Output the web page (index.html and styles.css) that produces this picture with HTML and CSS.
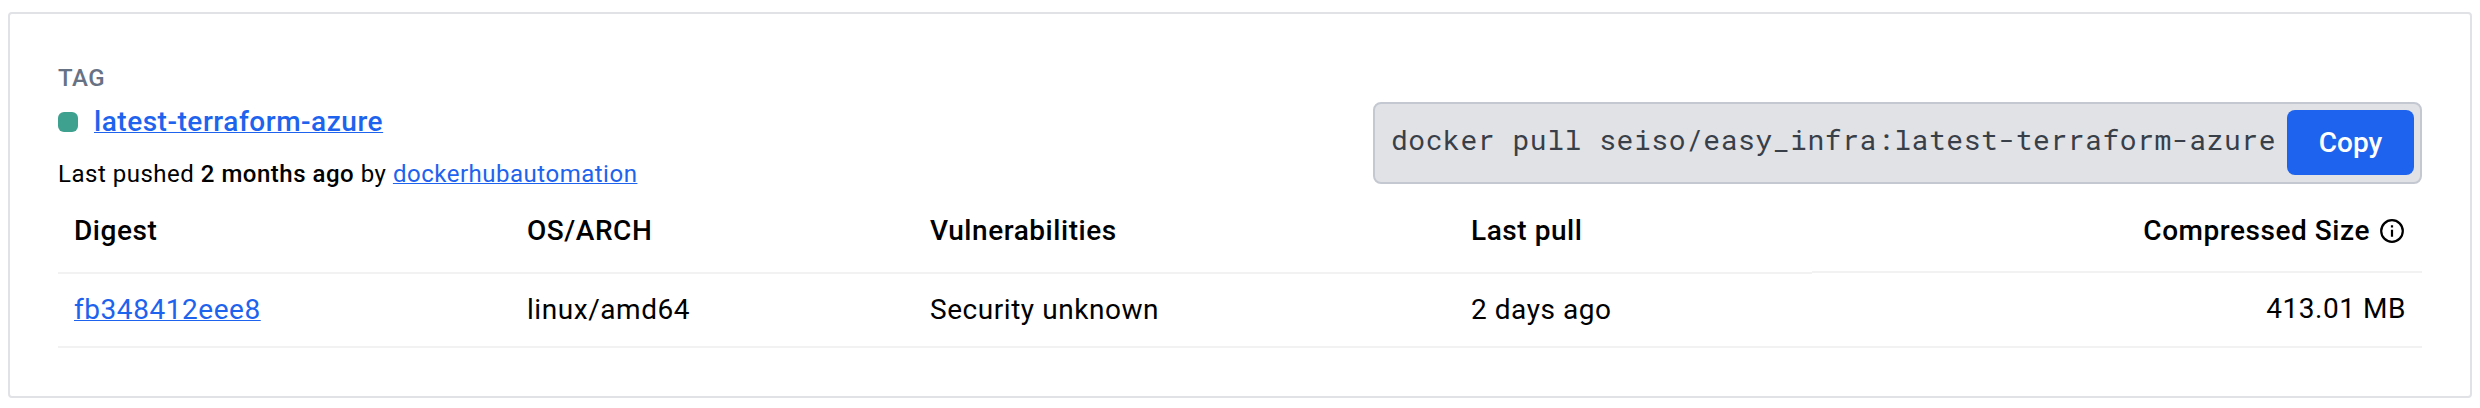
FILE: index.html
```html
<!DOCTYPE html>
<html lang="en">
<head>
<meta charset="utf-8">
<title>latest-terraform-azure</title>
<link rel="stylesheet" href="styles.css">
</head>
<body>
<section class="card">
  <header class="card-head">
    <div class="tag">
      <div class="tag-label">TAG</div>
      <div class="tag-name"><span class="status"></span><a class="tag-link" href="#">latest-terraform-azure</a></div>
      <div class="pushed">Last pushed <strong>2 months ago</strong> by <a href="#">dockerhubautomation</a></div>
    </div>
    <div class="command">
      <code class="command-text">docker pull seiso/easy_infra:latest-terraform-azure</code>
      <button class="copy" type="button">Copy</button>
    </div>
  </header>
  <div class="table">
    <div class="th">Digest</div>
    <div class="th">OS/ARCH</div>
    <div class="th">Vulnerabilities</div>
    <div class="th">Last pull</div>
    <div class="th th-size">
      <span>Compressed Size</span>
      <svg class="info" viewBox="0 0 24 24" aria-hidden="true">
        <circle cx="12" cy="12" r="10.8" fill="none" stroke="currentColor" stroke-width="2.2"/>
        <path d="M10.9 6.2h2.2v2.2h-2.2zM10.9 10.8h2.2v7h-2.2z" fill="currentColor"/>
      </svg>
    </div>
    <div class="td"><a href="#">fb348412eee8</a></div>
    <div class="td">linux/amd64</div>
    <div class="td">Security unknown</div>
    <div class="td">2 days ago</div>
    <div class="td td-size">413.01 MB</div>
  </div>
</section>
</body>
</html>
```
FILE: styles.css
```css
* { box-sizing: border-box; }
body {
  margin: 0;
  padding: 12px 8px 10px;
  background: #fff;
  color: #000;
  font: 400 28px/36px Roboto, sans-serif;
  letter-spacing: 0.55px;
}
a {
  color: #1d63ed;
  text-decoration: underline;
  text-decoration-thickness: 1px;
  text-underline-offset: 1px;
  text-decoration-skip-ink: none;
}
.card {
  height: 386px;
  padding: 50px 48px 48px;
  border: 2px solid #e1e2e6;
  border-radius: 4px;
}
.card-head {
  display: flex;
  justify-content: space-between;
  align-items: flex-start;
  height: 125px;
}
.tag { display: flex; flex-direction: column; }
.tag-label {
  color: #677285;
  font-size: 24px;
  font-weight: 500;
  line-height: 28px;
  letter-spacing: 0.5px;
}
.tag-name {
  display: flex;
  align-items: center;
  gap: 16px;
  height: 36px;
  margin: 12px 0 20px;
}
.status {
  width: 20px;
  height: 20px;
  border-radius: 6px;
  background: #3ea08e;
}
.tag-link { font-weight: 500; letter-spacing: 0.53px; }
.pushed { font-size: 24px; line-height: 28px; letter-spacing: 0.51px; }
.pushed strong { font-weight: 500; }
.command {
  display: flex;
  align-items: flex-start;
  justify-content: space-between;
  width: 1049px;
  height: 82px;
  margin-top: 38px;
  padding: 6px 6px 0 16px;
  border: 2px solid #c4c8d1;
  border-radius: 8px;
  background: #e1e2e6;
}
.command-text {
  margin-top: 12px;
  color: #393f49;
  font: 28px/36px "Roboto Mono", "Liberation Mono", monospace;
  letter-spacing: 0.55px;
  white-space: nowrap;
}
.copy {
  width: 127px;
  height: 65px;
  padding: 0;
  border: 0;
  border-radius: 8px;
  background: #1d63ed;
  color: #fff;
  font: 500 28px/36px Roboto, sans-serif;
}
.table {
  display: grid;
  grid-template-columns: 453px 403px 541px 357px 610px;
  grid-template-rows: 85px 74px;
}
.th, .td {
  display: flex;
  align-items: center;
  padding: 0 16px;
  border-bottom: 2px solid #f2f2f3;
}
.th { font-weight: 500; }
.th-size {
  justify-content: flex-end;
  gap: 10px;
  height: 84px;
  padding-top: 1px;
  padding-right: 18px;
}
.td-size {
  justify-content: flex-end;
  margin-top: -1px;
  padding-bottom: 1px;
}
.info { width: 24px; height: 24px; }
```
